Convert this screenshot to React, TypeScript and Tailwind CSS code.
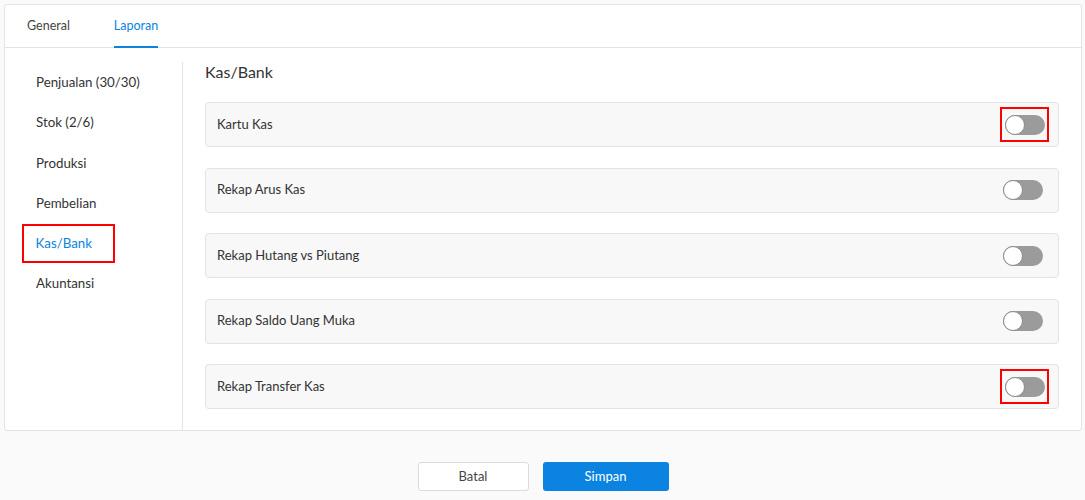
import React from "react";

const menu = ["Penjualan (30/30)", "Stok (2/6)", "Produksi", "Pembelian", "Kas/Bank", "Akuntansi"];
const rows = ["Kartu Kas", "Rekap Arus Kas", "Rekap Hutang vs Piutang", "Rekap Saldo Uang Muka", "Rekap Transfer Kas"];
const highlighted = [0, 4];

function Toggle() {
  return (
    <div className="w-[40px] h-[20px] rounded-full bg-[#9b9b9b] relative">
      <div className="absolute left-0 top-0 w-[20px] h-[20px] rounded-full bg-white border border-[#8a8a8a]" />
    </div>
  );
}

export default function App() {
  return (
    <div className="w-[1085px] h-[500px] bg-[#fafafa] pt-[4px] px-[4px] text-[#333] [font-family:Lato,'Noto_Sans',sans-serif] text-[14px]">
      <div className="w-[1078px] h-[427px] bg-white border border-[#e3e3e3] rounded-[3px] flex flex-col">
        <div className="h-[43px] border-b border-[#e3e3e3] flex items-end pl-[22px] gap-[44px]">
          <div className="h-full flex items-center text-[12.5px] text-[#444]">General</div>
          <div className="h-full flex items-center text-[12.5px] text-[#0a84e0] border-b-2 border-[#0a84e0] -mb-px">Laporan</div>
        </div>
        <div className="flex flex-1 pt-[14px]">
          <div className="w-[178px] border-r border-[#e3e3e3] pl-[17px] pt-[1px] flex flex-col text-[13.3px]">
            {menu.map((m) => (
              <div key={m} className="h-[40.2px] flex items-center">
                {m === "Kas/Bank" ? (
                  <div className="border-[2.5px] border-[#ff0000] w-[93px] h-[39px] flex items-center pl-[11.5px] text-[#0a84e0]">{m}</div>
                ) : (
                  <div className="pl-[14px]">{m}</div>
                )}
              </div>
            ))}
          </div>
          <div className="flex-1 pl-[22px] pr-[22px] pt-[2px]">
            <div className="text-[16px] text-[#333] leading-none h-[20px] mt-[0px] mb-[18px]">Kas/Bank</div>
            <div className="flex flex-col gap-[20.5px]">
              {rows.map((r, i) => (
                <div key={r} className="h-[45px] bg-[#f8f8f8] border border-[#e3e3e3] rounded-[4px] flex items-center justify-between pl-[11px] pr-[15px] text-[13px]">
                  <span>{r}</span>
                  {highlighted.includes(i) ? (
                    <div className="border-[2.5px] border-[#ff0000] w-[49px] h-[35px] flex items-center justify-center -mr-[6px]">
                      <Toggle />
                    </div>
                  ) : (
                    <Toggle />
                  )}
                </div>
              ))}
            </div>
          </div>
        </div>
      </div>
      <div className="flex justify-center gap-[14px] mt-[31px] pl-[1px]">
        <button className="w-[111px] h-[29px] bg-white border border-[#dcdcdc] rounded-[3px] text-[13px] text-[#444]">Batal</button>
        <button className="w-[126px] h-[29px] bg-[#0a84e0] rounded-[3px] text-[13px] text-white">Simpan</button>
      </div>
    </div>
  );
}
